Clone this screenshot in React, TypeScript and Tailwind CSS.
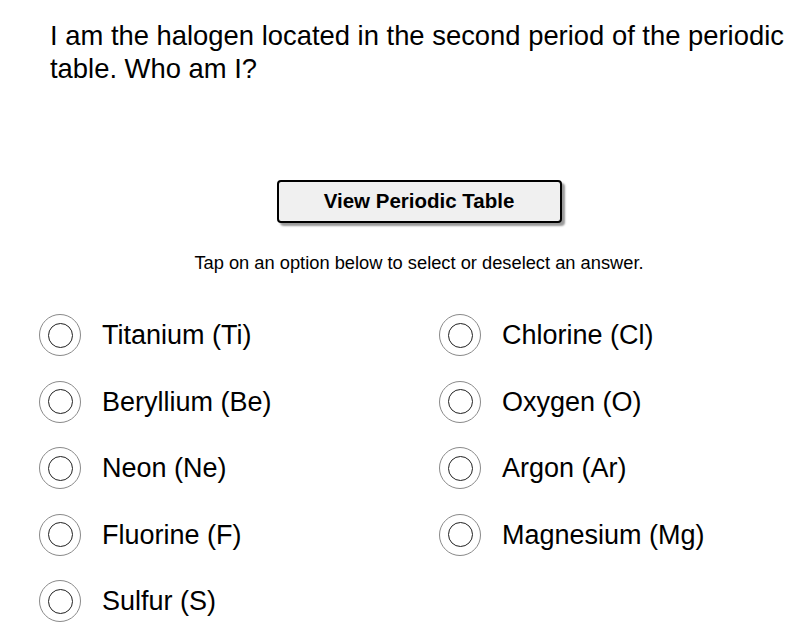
const options = [
  ['Titanium (Ti)', 'Chlorine (Cl)'],
  ['Beryllium (Be)', 'Oxygen (O)'],
  ['Neon (Ne)', 'Argon (Ar)'],
  ['Fluorine (F)', 'Magnesium (Mg)'],
  ['Sulfur (S)', null],
];

function Radio() {
  return (
    <span className="flex h-[42px] w-[42px] shrink-0 items-center justify-center rounded-full border border-[#8a8a8a]">
      <span className="h-[25px] w-[25px] rounded-full border-[1.5px] border-[#222]" />
    </span>
  );
}

function Option({ label }: { label: string }) {
  return (
    <button className="flex items-center gap-[21px] text-left">
      <Radio />
      <span className="text-[27px] leading-[40px] text-black">{label}</span>
    </button>
  );
}

export default function App() {
  return (
    <div className="h-[631px] w-[792px] overflow-hidden bg-white font-['Liberation_Sans',Arial,sans-serif] text-black">
      <div className="ml-[39px] w-[760px]">
        <h1 className="pl-[11px] pt-[19px] text-[27.4px] leading-[33px]">
          I am the halogen located in the second period of the periodic table. Who am I?
        </h1>

        <div className="mt-[95px] flex justify-center">
          <button className="h-[43px] w-[285px] rounded-[4px] border-2 border-black bg-[#f0f0f0] text-[20.5px] font-bold shadow-[3px_3px_2px_#9a9a9a]">
            View Periodic Table
          </button>
        </div>

        <p className="mt-[26px] text-center text-[18.3px] leading-[27px]">
          Tap on an option below to select or deselect an answer.
        </p>

        <div className="mt-[38px] grid grid-cols-[400px_1fr] gap-y-[24.5px]">
          {options.map(([left, right], i) => (
            <div key={i} className="contents">
              <Option label={left as string} />
              {right ? <Option label={right} /> : <div />}
            </div>
          ))}
        </div>
      </div>
    </div>
  );
}
